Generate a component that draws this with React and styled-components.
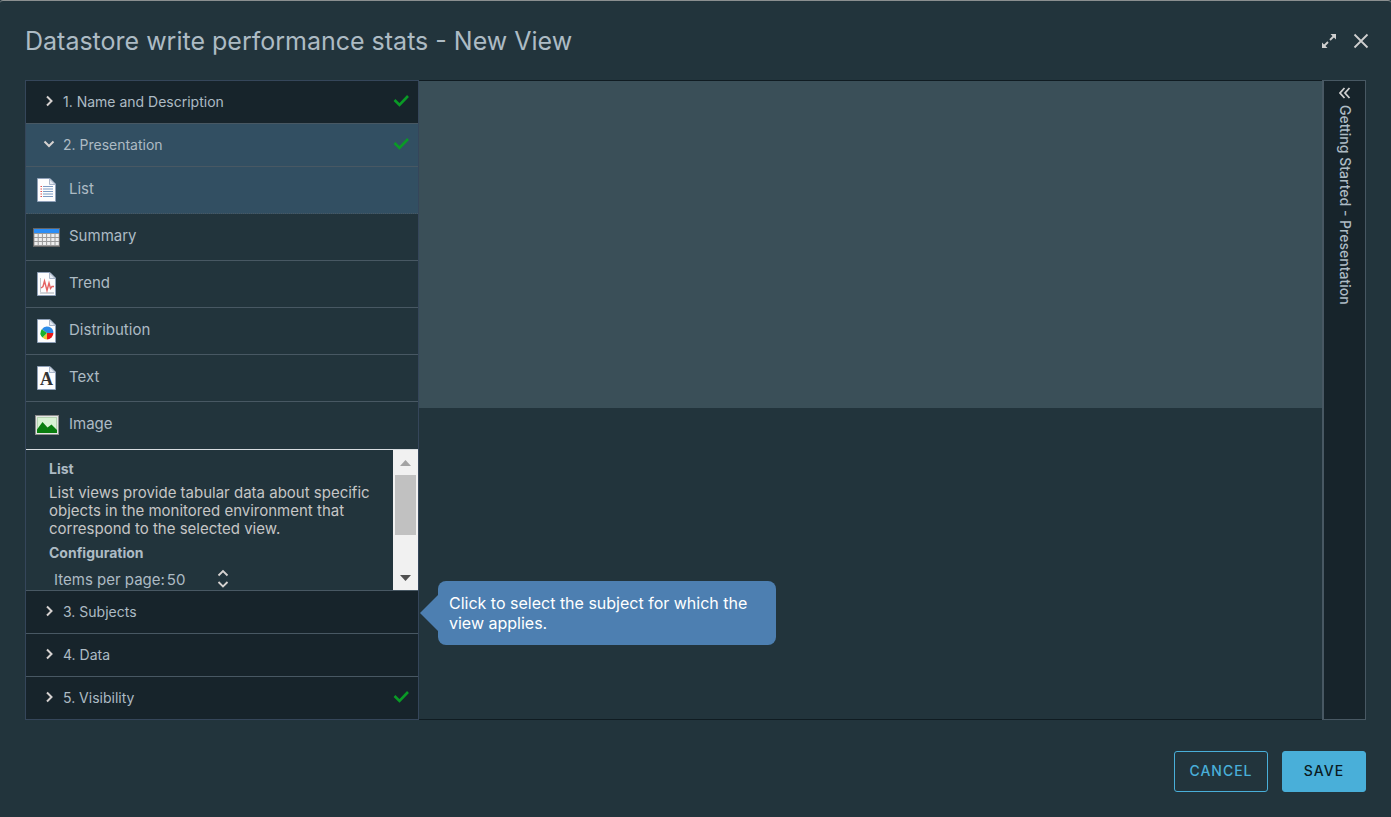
import React, { useState } from "react";
import styled, { createGlobalStyle } from "styled-components";

const GlobalStyle = createGlobalStyle`
  * {
    box-sizing: border-box;
  }
  body {
    margin: 0;
    background: #22343c;
    color: #adbbc4;
    font-family: Inter, "Open Sans", sans-serif;
    font-size: 14px;
  }
  button,
  select {
    font: inherit;
    color: inherit;
  }
`;

const Dialog = styled.main`
  min-height: 100vh;
  display: flex;
  flex-direction: column;
  padding: 0 25px;
  border-top: 1px solid #8b8f90;
  border-radius: 3px 3px 0 0;
`;

const Header = styled.header`
  height: 79px;
  display: flex;
  align-items: center;
  justify-content: space-between;
`;

const Title = styled.h1`
  margin: 0;
  font-size: 25px;
  line-height: 24px;
  font-weight: 400;
`;

const HeaderActions = styled.div`
  display: flex;
  gap: 8px;
  margin-right: -7px;
`;

const IconButton = styled.button`
  width: 24px;
  height: 24px;
  padding: 0;
  display: flex;
  align-items: center;
  justify-content: center;
  border: 0;
  background: transparent;
  color: #cfcfcf;
  cursor: pointer;
`;

const Body = styled.div`
  flex: 1;
  display: flex;
`;

// Left side steps
const Steps = styled.nav`
  width: 394px;
  flex-shrink: 0;
  border: 1px solid #35465a;
`;

const Step = styled.div`
  position: relative;
  border-bottom: ${(props) => (props.$last ? "0" : "1px solid #485863")};
`;

const StepButton = styled.button`
  width: 100%;
  height: 42px;
  padding: 0 8px 2px 16px;
  display: flex;
  align-items: center;
  gap: 7px;
  border: 0;
  background: ${(props) => (props.$open ? "#324f62" : "#17242b")};
  text-align: left;
  cursor: pointer;
`;

const StepName = styled.span`
  flex: 1;
`;

const ViewType = styled.button`
  width: 100%;
  height: 47px;
  padding: 0 6px;
  display: flex;
  align-items: center;
  gap: 8px;
  border: 0;
  border-bottom: 1px ${(props) => (props.$selected ? "dotted" : "solid")}
    #485863;
  background: ${(props) => (props.$selected ? "#324f62" : "transparent")};
  font-size: 15px;
  text-align: left;
  cursor: pointer;

  &:last-child {
    border-bottom-color: transparent;
  }
`;

const ViewTypeName = styled.span`
  padding-bottom: 3px;
`;

const Details = styled.section`
  height: 142px;
  display: flex;
  border-top: 1px solid #d8dde0;
  border-bottom: 1px solid #485863;
  font-size: 15px;
`;

const DetailsContent = styled.div`
  flex: 1;
  padding: 10px 23px 0;
  overflow: hidden;
`;

const DetailsTitle = styled.h2`
  margin: 0;
  font-size: 14px;
  line-height: 18px;
  font-weight: 700;
`;

const DetailsText = styled.p`
  margin: 6px 0;
  color: #c6c6c6;
  line-height: 18px;
`;

const Field = styled.div`
  display: flex;
  align-items: center;
  gap: 2px;
  padding: 5px 5px 0;
`;

const SelectBox = styled.div`
  position: relative;
  width: 64px;
`;

const Select = styled.select`
  width: 100%;
  height: 24px;
  padding: 0;
  border: 0;
  appearance: none;
  background: transparent;
`;

const SelectArrows = styled.svg`
  position: absolute;
  right: 2px;
  top: 2px;
  pointer-events: none;
`;

const Scrollbar = styled.div`
  width: 25px;
  height: 100%;
  display: flex;
  flex-direction: column;
  background: #f1f1f1;
`;

const ScrollArrow = styled.button`
  height: 25px;
  padding: 0;
  display: flex;
  align-items: center;
  justify-content: center;
  border: 0;
  background: transparent;
  color: ${(props) => (props.disabled ? "#a3a3a3" : "#505050")};
`;

const ScrollTrack = styled.div`
  flex: 1;
  padding: 0 2px;
`;

const ScrollThumb = styled.div`
  height: 60px;
  background: #c1c1c1;
`;

const Hint = styled.div`
  position: absolute;
  z-index: 1;
  top: -10px;
  left: calc(100% + 20px);
  width: 338px;
  padding: 12px 11px;
  border-radius: 8px;
  background: #4d7fb1;
  color: #fff;
  font-size: 16px;
  line-height: 20px;

  &::before {
    content: "";
    position: absolute;
    top: 14px;
    right: 100%;
    border: 18px solid transparent;
    border-left-width: 0;
    border-right-color: #4d7fb1;
  }
`;

// Preview area in the middle
const Preview = styled.div`
  flex: 1;
  border: solid #101c22;
  border-width: 1px 0;
`;

const PreviewTop = styled.div`
  height: 327px;
  background: #3a4f58;
`;

const Guide = styled.aside`
  width: 44px;
  display: flex;
  flex-direction: column;
  align-items: center;
  border: 1px solid #485863;
  border-left-width: 2px;
  background: #17242b;
`;

const GuideTitle = styled.h2`
  margin: 0;
  writing-mode: vertical-rl;
  font-size: 14px;
  line-height: 18px;
  font-weight: 500;
`;

const Footer = styled.footer`
  height: 97px;
  display: flex;
  align-items: center;
  justify-content: flex-end;
  gap: 14px;
  padding-top: 6px;
`;

const Button = styled.button`
  height: 41px;
  width: ${(props) => (props.$primary ? "84px" : "94px")};
  padding: 0 0 2px;
  border: 1px solid #49afd9;
  border-radius: 3px;
  background: ${(props) => (props.$primary ? "#49afd9" : "transparent")};
  color: ${(props) => (props.$primary ? "#0a1a22" : "#49afd9")};
  font-size: 14px;
  font-weight: 500;
  letter-spacing: 1px;
  cursor: pointer;
`;

const Chevron = ({ open }) => (
  <svg width="14" height="14" viewBox="0 0 14 14" aria-hidden="true">
    <path
      d={open ? "M2.5 4.5 L7 9 L11.5 4.5" : "M5 2.5 L9.5 7 L5 11.5"}
      fill="none"
      stroke="#d6d2d0"
      strokeWidth="2"
    />
  </svg>
);

const Check = () => (
  <svg width="17" height="14" viewBox="0 0 17 14" aria-hidden="true">
    <path
      d="M1.5 6 L6.5 11 L15 2"
      fill="none"
      stroke="#0a9a26"
      strokeWidth="2.6"
    />
  </svg>
);

// White sheet with a folded corner, shared by most of the view types
const Sheet = ({ children }) => (
  <svg width="29" height="26" viewBox="0 0 29 26" aria-hidden="true">
    <path
      d="M5.5 1.5 H18 L23.5 7 V24.5 H5.5 Z"
      fill="#fdfdfe"
      stroke="#8fa0b8"
    />
    <path d="M17.5 2 V7.5 H23 Z" fill="#e6ecf4" stroke="#a9b6ca" />
    {children}
  </svg>
);

const ListIcon = () => (
  <Sheet>
    <path
      d="M8.5 9.5h1.5M8.5 12h1.5M8.5 14.5h1.5M8.5 17h1.5M8.5 19.5h1.5"
      stroke="#e05252"
    />
    <path
      d="M11 9.5h10M11 12h10M11 14.5h10M11 17h10M11 19.5h10"
      stroke="#7d9cc4"
    />
  </Sheet>
);

const SummaryIcon = () => (
  <svg width="29" height="26" viewBox="0 0 29 26" aria-hidden="true">
    <rect x="1.5" y="4.5" width="26" height="18" fill="#9a9a9a" stroke="#666" />
    <path d="M2 5h25v4H2z" fill="#2b8df5" />
    <path
      d="M2.5 11.5h24.500M2.5 15.5h24.500M2.5 19.5h24.500"
      stroke="#eeeeee"
      strokeWidth="3"
      strokeDasharray="3.2 1"
    />
  </svg>
);

const TrendIcon = () => (
  <Sheet>
    <path d="M8.5 7v15" stroke="#c2c6cc" />
    <path d="M8 22h14" stroke="#d0d3d8" strokeWidth="2" />
    <path
      d="M9 17 L11 15.5 L12.5 10 L15 19.5 L17 12 L18.5 17.5 L20 15.5 H22"
      fill="none"
      stroke="#e46464"
      strokeWidth="1.4"
    />
  </Sheet>
);

const DistributionIcon = () => (
  <Sheet>
    <path d="M15 15 L9.8 11.2 A6.4 6.4 0 0 1 21.4 15 Z" fill="#2b8ae8" />
    <path d="M15 15 H21.4 A6.4 6.4 0 0 1 15 21.4 Z" fill="#e81717" />
    <path d="M15 15 V21.4 A6.4 6.4 0 0 1 10.5 19.5 Z" fill="#e8c53a" />
    <path
      d="M15 15 L10.5 19.5 A6.4 6.4 0 0 1 9.8 11.2 Z"
      fill="#18b030"
    />
  </Sheet>
);

const SheetLetter = styled.text`
  font-family: "Liberation Serif", serif;
  font-size: 18px;
  font-weight: 700;
  fill: #333;
`;

const TextIcon = () => (
  <Sheet>
    <SheetLetter x="14.5" y="20" textAnchor="middle">
      A
    </SheetLetter>
  </Sheet>
);

const ImageIcon = () => (
  <svg width="29" height="26" viewBox="0 0 29 26" aria-hidden="true">
    <rect x="3.5" y="3.5" width="23" height="19" fill="#e4e6e4" stroke="#8c8c8c" />
    <rect x="5.5" y="5.5" width="19" height="15" fill="#d9f2d4" stroke="#b5d3b0" />
    <path
      d="M5 21 V17.5 L10.5 10 L15.5 15.5 L19.5 12.5 L25 18 V21 Z"
      fill="#0a7d0f"
    />
  </svg>
);

const viewTypes = [
  { name: "List", Icon: ListIcon },
  { name: "Summary", Icon: SummaryIcon },
  { name: "Trend", Icon: TrendIcon },
  { name: "Distribution", Icon: DistributionIcon },
  { name: "Text", Icon: TextIcon },
  { name: "Image", Icon: ImageIcon },
];

const StepHeader = ({ name, open, done }) => (
  <StepButton type="button" $open={open} aria-expanded={!!open}>
    <Chevron open={open} />
    <StepName>{name}</StepName>
    {done && <Check />}
  </StepButton>
);

const App = () => {
  const [selected, setSelected] = useState("List");

  return (
    <>
      <GlobalStyle />
      <Dialog>
        <Header>
          <Title>Datastore write performance stats - New View</Title>
          <HeaderActions>
            <IconButton type="button" aria-label="Expand">
              <svg width="16" height="16" viewBox="0 0 16 16">
                <path
                  d="M9.5 1 H15 V6.5 Z M1 9.5 V15 H6.5 Z"
                  fill="currentColor"
                />
                <path
                  d="M13 3 L9 7 M7 9 L3 13"
                  stroke="currentColor"
                  strokeWidth="1.8"
                />
              </svg>
            </IconButton>
            <IconButton type="button" aria-label="Close">
              <svg width="16" height="16" viewBox="0 0 16 16">
                <path
                  d="M1.5 1.5 L14.5 14.5 M14.5 1.5 L1.5 14.5"
                  stroke="currentColor"
                  strokeWidth="1.8"
                />
              </svg>
            </IconButton>
          </HeaderActions>
        </Header>

        <Body>
          <Steps>
            <Step>
              <StepHeader name="1. Name and Description" done />
            </Step>
            <Step>
              <StepHeader name="2. Presentation" open done />
            </Step>
            <div>
              {viewTypes.map(({ name, Icon }) => (
                <ViewType
                  key={name}
                  type="button"
                  $selected={name === selected}
                  onClick={() => setSelected(name)}
                >
                  <Icon />
                  <ViewTypeName>{name}</ViewTypeName>
                </ViewType>
              ))}
            </div>
            <Details>
              <DetailsContent>
                <DetailsTitle>List</DetailsTitle>
                <DetailsText>
                  List views provide tabular data about specific objects in the
                  monitored environment that correspond to the selected view.
                </DetailsText>
                <DetailsTitle>Configuration</DetailsTitle>
                <Field>
                  <label htmlFor="page-size">Items per page:</label>
                  <SelectBox>
                    <Select id="page-size" defaultValue="50">
                      <option>50</option>
                      <option>100</option>
                    </Select>
                    <SelectArrows width="12" height="20" viewBox="0 0 12 20">
                      <path
                        d="M1.5 6.5 L6 2 L10.5 6.5 M1.5 13 L6 17.5 L10.5 13"
                        fill="none"
                        stroke="#d6d2d0"
                        strokeWidth="1.8"
                      />
                    </SelectArrows>
                  </SelectBox>
                </Field>
              </DetailsContent>
              <Scrollbar>
                <ScrollArrow type="button" aria-label="Scroll up" disabled>
                  <svg width="11" height="6" viewBox="0 0 11 6">
                    <path d="M0 6 L5.5 0 L11 6 Z" fill="currentColor" />
                  </svg>
                </ScrollArrow>
                <ScrollTrack>
                  <ScrollThumb />
                </ScrollTrack>
                <ScrollArrow type="button" aria-label="Scroll down">
                  <svg width="11" height="6" viewBox="0 0 11 6">
                    <path d="M0 0 H11 L5.5 6 Z" fill="currentColor" />
                  </svg>
                </ScrollArrow>
              </Scrollbar>
            </Details>
            <Step>
              <StepHeader name="3. Subjects" />
              <Hint role="tooltip">
                Click to select the subject for which the view applies.
              </Hint>
            </Step>
            <Step>
              <StepHeader name="4. Data" />
            </Step>
            <Step $last>
              <StepHeader name="5. Visibility" done />
            </Step>
          </Steps>

          <Preview>
            <PreviewTop />
          </Preview>

          <Guide>
            <IconButton type="button" aria-label="Show guide">
              <svg width="12" height="12" viewBox="0 0 12 12">
                <path
                  d="M5.5 1 L1 6 L5.5 11 M10.5 1 L6 6 L10.5 11"
                  fill="none"
                  stroke="currentColor"
                  strokeWidth="1.8"
                />
              </svg>
            </IconButton>
            <GuideTitle>Getting Started - Presentation</GuideTitle>
          </Guide>
        </Body>

        <Footer>
          <Button type="button">CANCEL</Button>
          <Button type="button" $primary>
            SAVE
          </Button>
        </Footer>
      </Dialog>
    </>
  );
};

export default App;
